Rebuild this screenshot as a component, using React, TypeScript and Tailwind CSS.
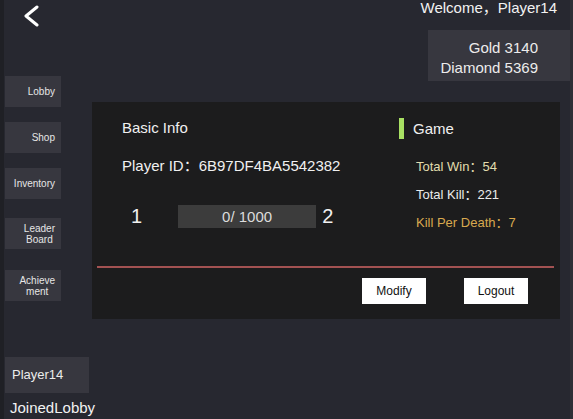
const navItems = [
  { label: ['Lobby'], mt: 'mt-[49px]' },
  { label: ['Shop'], mt: 'mt-[15px]' },
  { label: ['Inventory'], mt: 'mt-[15px]' },
  { label: ['Leader', 'Board'], mt: 'mt-[19px]' },
  { label: ['Achieve', 'ment'], mt: 'mt-[21px]' },
]

function BackArrow() {
  return (
    <svg width="16" height="22" viewBox="0 0 16 22" className="ml-[19px]">
      <polyline
        points="14,2 3,11 14,20"
        fill="none"
        stroke="#ffffff"
        strokeWidth="3"
        strokeLinecap="round"
        strokeLinejoin="round"
      />
    </svg>
  )
}

function Sidebar() {
  return (
    <div className="w-[88px] flex flex-col pt-[5px]">
      <BackArrow />
      {navItems.map((item) => (
        <div
          key={item.label.join(' ')}
          className={`${item.mt} ml-[1px] w-[56px] h-[31px] bg-[#37373f] flex items-center justify-end pr-[6px]`}
        >
          <span className="text-center text-[10px] leading-[11px] text-[#e6e6e6]">
            {item.label.map((l) => (
              <span key={l} className="block">
                {l}
              </span>
            ))}
          </span>
        </div>
      ))}
      <div className="mt-[56px] ml-[1px] w-[84px] h-[36px] bg-[#37373f] flex items-center pl-[7px] text-[13px] text-[#ececec]">
        Player14
      </div>
      <div className="mt-[6px] ml-[6px] text-[15px] leading-[18px] text-[#f2f2f2]">
        JoinedLobby
      </div>
    </div>
  )
}

function InfoPanel() {
  return (
    <div className="mt-[21px] w-[468px] h-[217px] bg-[#1c1c1d] flex flex-col">
      <div className="h-[164px] flex">
        <div className="w-[307px] pl-[30px] pt-[16px] flex flex-col text-[15px] leading-[20px] text-[#f0f0f0]">
          <div>Basic Info</div>
          <div className="mt-[18px]">Player ID：6B97DF4BA5542382</div>
          <div className="mt-[29px] h-[23px] flex items-center">
            <span className="ml-[9px] text-[20px] leading-[23px]">1</span>
            <div className="ml-[36px] w-[138px] h-[23px] bg-[#3c3c3c] flex items-center justify-center text-[#dcdcdc]">
              0/ 1000
            </div>
            <span className="ml-[6px] text-[20px] leading-[23px]">2</span>
          </div>
        </div>
        <div className="flex flex-col pt-[16px]">
          <div className="flex items-center h-[21px]">
            <div className="w-[5px] h-[21px] bg-[#a8e063]" />
            <span className="ml-[9px] text-[15px] leading-[20px] text-[#f0f0f0]">
              Game
            </span>
          </div>
          <div className="pl-[17px] mt-[20px] flex flex-col gap-[12px] text-[13px] leading-[16px]">
            <div className="text-[#e2dcae]">Total Win：54</div>
            <div className="text-[#ececec]">Total Kill：221</div>
            <div className="text-[#d8a94f]">Kill Per Death：7</div>
          </div>
        </div>
      </div>
      <div className="mx-[5px] mr-[6px] h-[2px] bg-[#a35252]" />
      <div className="mt-[10px] flex">
        <button className="ml-[270px] w-[64px] h-[26px] bg-white text-[12px] text-[#111]">
          Modify
        </button>
        <button className="ml-[38px] w-[64px] h-[26px] bg-white text-[12px] text-[#111]">
          Logout
        </button>
      </div>
    </div>
  )
}

export default function App() {
  return (
    <div className="w-[573px] h-[419px] overflow-hidden flex bg-[#272830] font-['Liberation_Sans','Noto_Sans_CJK_SC',sans-serif]">
      <div className="w-[4px] h-full bg-[#1f2025]" />
      <Sidebar />
      <div className="flex-1 flex flex-col">
        <div className="self-end mr-[13px] -mt-[1px] text-[15px] leading-[17px] text-[#f2f2f2]">
          Welcome，Player14
        </div>
        <div className="self-end mt-[14px] w-[142px] h-[51px] bg-[#37373f] pt-[8px] pr-[32px] text-right text-[15px] leading-[20px] text-[#ececec]">
          <div>Gold 3140</div>
          <div>Diamond 5369</div>
        </div>
        <InfoPanel />
      </div>
      <div className="w-[3px] h-full bg-[#2e2f36]" />
    </div>
  )
}
